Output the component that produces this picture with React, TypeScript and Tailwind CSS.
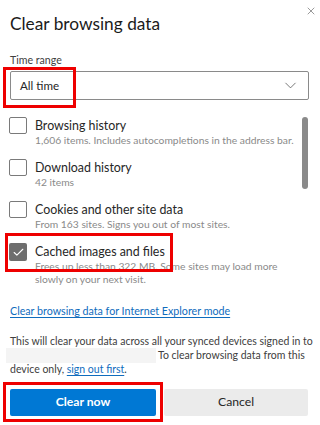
import { X, ChevronDown, Check } from "lucide-react";

// ─────────────────────────────
// Clear browsing data dialog
// ─────────────────────────────
type Item = {
  label: string;
  desc: string[];
  checked?: boolean;
};

const items: Item[] = [
  { label: "Browsing history", desc: ["1,606 items. Includes autocompletions in the address bar."] },
  { label: "Download history", desc: ["42 items"] },
  { label: "Cookies and other site data", desc: ["From 163 sites. Signs you out of most sites."] },
  {
    label: "Cached images and files",
    desc: ["Frees up less than 322 MB. Some sites may load more", "slowly on your next visit."],
    checked: true,
  },
];

export default function App() {
  return (
    <div
      className="relative w-[320px] h-[425px] overflow-hidden bg-white text-[#262626]"
      style={{ fontFamily: 'Lato, "Open Sans", sans-serif' }}
    >
      {/* close button */}
      <button className="absolute right-[3px] top-[6px] w-[12px] h-[10px] flex items-center justify-center text-[#555]">
        <X className="w-[14px] h-[14px]" strokeWidth={1.2} />
      </button>

      <div className="pl-[10px] pr-[11px] pt-[11px]">
        <h1 className="text-[17.3px] leading-[26px] font-normal text-[#1b1b1b]">
          Clear browsing data
        </h1>

        {/* time range */}
        <p className="mt-[15px] text-[10.6px] leading-[16px] text-[#404040]">Time range</p>
        <div className="relative mt-[3px] h-[29px] border border-[#8a8a8a] rounded-[2px] flex items-center justify-between pl-[9px] pr-[8px]">
          <span className="text-[11.6px] text-[#262626]">All time</span>
          <ChevronDown className="w-[19px] h-[19px] text-[#555]" strokeWidth={1} />
        </div>

        {/* checkbox list */}
        <div className="relative mt-[17px]">
          <div className="absolute right-[1px] top-[0px] w-[6px] h-[72px] rounded-full bg-[#8a8a8a]" />
          <div className="flex flex-col gap-[12px]">
            {items.map((it) => (
              <div key={it.label} className="flex gap-[8px]">
                {it.checked ? (
                  <div className="-ml-[1px] w-[18px] h-[18px] rounded-[2px] bg-[#6e6e6e] flex items-center justify-center shrink-0">
                    <Check className="w-[13px] h-[13px] text-white" strokeWidth={2} />
                  </div>
                ) : (
                  <div className="-ml-[1px] w-[18px] h-[17px] rounded-[2px] border border-[#7a7a7a] bg-white shrink-0" />
                )}
                <div>
                  <p className="text-[12.4px] leading-[17px] text-[#262626]">{it.label}</p>
                  {it.desc.map((d) => (
                    <p key={d} className="text-[10.3px] leading-[13px] text-[#8a8a8a] whitespace-nowrap">
                      {d}
                    </p>
                  ))}
                </div>
              </div>
            ))}
          </div>
        </div>

        <a className="block mt-[17px] text-[10.7px] leading-[16px] text-[#0f6cbd] underline underline-offset-2">
          Clear browsing data for Internet Explorer mode
        </a>

        {/* sync notice */}
        <div className="mt-[16px] text-[10.5px] leading-[13px] text-[#404040]">
          <p className="whitespace-nowrap">This will clear your data across all your synced devices signed in to</p>
          <div className="flex items-center">
            <span className="-ml-[4px] w-[150px] h-[15px] bg-[#f4f4f4] inline-block" />
            <span className="ml-[2px] whitespace-nowrap">To clear browsing data from this</span>
          </div>
          <p>
            device only,{" "}
            <a className="text-[#0f6cbd] underline underline-offset-2">sign out first</a>.
          </p>
        </div>

        {/* actions */}
        <div className="mt-[13px] flex gap-[8px] pr-[1px]">
          <button className="w-[146px] h-[27px] rounded-[2px] bg-[#0078d4] text-white text-[12.2px] font-bold">
            Clear now
          </button>
          <button className="flex-1 h-[27px] rounded-[2px] bg-[#ebebeb] text-[#262626] text-[12.2px]">
            Cancel
          </button>
        </div>
      </div>

      {/* red highlight boxes */}
      <div className="absolute left-[3px] top-[67px] w-[73px] h-[41px] border-[3px] border-[#ee0000]" />
      <div className="absolute left-[5px] top-[233px] w-[168px] h-[39px] border-[3px] border-[#ee0000]" />
      <div className="absolute left-[3px] top-[382px] w-[160px] h-[40px] border-[3px] border-[#ee0000]" />
    </div>
  );
}
